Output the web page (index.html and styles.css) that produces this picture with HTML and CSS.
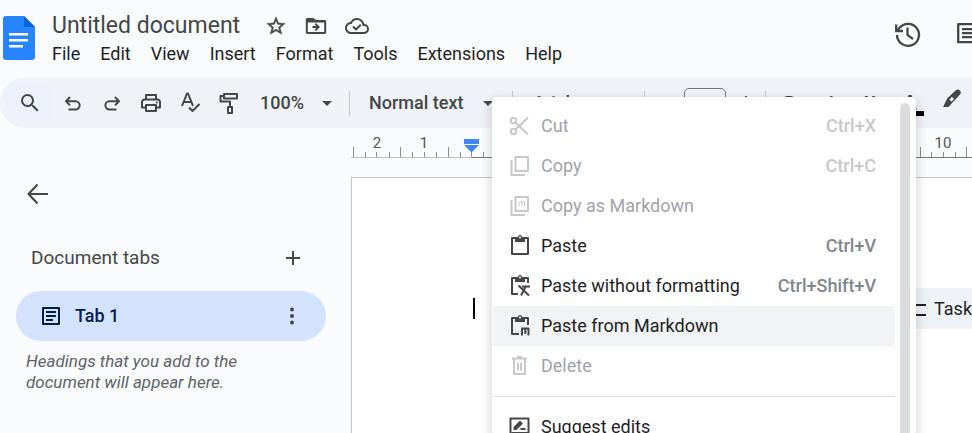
FILE: index.html
```html
<!DOCTYPE html>
<html lang="en">
<head>
<meta charset="utf-8">
<title>Untitled document</title>
<link rel="stylesheet" href="styles.css">
</head>
<body>
<header class="header">
  <a class="logo" href="#" aria-label="Docs home">
    <svg width="32" height="44" viewBox="0 0 32 44"><path fill="#2684fc" d="M3 0h18l11 11v30a3 3 0 0 1-3 3H3a3 3 0 0 1-3-3V3a3 3 0 0 1 3-3z"/><path fill="#0066da" d="M21 0l11 11H21z"/><path fill="#fff" d="M6 17h19v2.500H6zM6 23h19v2.500H6zM6 29h14v2.500H6z"/></svg>
  </a>
  <div class="heading">
    <div class="title-row">
      <h1 class="title">Untitled document</h1>
      <div class="title-actions">
        <button class="icon-button" aria-label="Star"><svg width="22" height="22" viewBox="0 0 24 24"><path stroke="currentColor" stroke-width=".5" d="M22 9.240l-7.190-.620L12 2 9.190 8.630 2 9.240l5.460 4.730L5.820 21 12 17.270 18.180 21l-1.630-7.030L22 9.240zM12 15.400l-3.760 2.270 1-4.280-3.320-2.880 4.380-.380L12 6.100l1.710 4.040 4.380.380-3.320 2.880 1 4.280L12 15.400z"/></svg></button>
        <button class="icon-button" aria-label="Move"><svg width="24" height="24" viewBox="0 0 24 24"><path d="M20.500 6H12L9.500 4H3.500C2.500 4 1.800 4.700 1.800 5.700v12.600c0 1 .7 1.700 1.700 1.700h17c1 0 1.700-.7 1.700-1.700V7.700c0-1-.7-1.700-1.700-1.700zm-.3 12H3.800V8.500h16.400zM12 9l-1.300 1.300 1.600 1.700H8.500v2h3.800l-1.600 1.700L12 17l4-4z"/></svg></button>
        <button class="icon-button" aria-label="Document status"><svg width="24" height="24" viewBox="0 0 24 24"><path d="M19.350 10.040A7.490 7.490 0 0 0 12 4C9.110 4 6.600 5.640 5.350 8.040A5.990 5.990 0 0 0 0 14c0 3.310 2.690 6 6 6h13c2.760 0 5-2.240 5-5 0-2.640-2.050-4.780-4.650-4.960zM19 18H6c-2.210 0-4-1.790-4-4 0-2.050 1.530-3.760 3.560-3.970l1.070-.110.5-.950A5.469 5.469 0 0 1 12 6c2.620 0 4.880 1.860 5.390 4.430l.3 1.500 1.530.110A2.980 2.980 0 0 1 22 15c0 1.650-1.350 3-3 3z"/><path class="line" d="M8 12.500l3 3 4.800-4.800"/></svg></button>
      </div>
    </div>
    <nav class="menubar">
      <button>File</button><button>Edit</button><button>View</button><button>Insert</button><button>Format</button><button>Tools</button><button>Extensions</button><button>Help</button>
    </nav>
  </div>
  <div class="header-end">
    <button class="icon-button" aria-label="Version history"><svg width="28" height="28" viewBox="0 0 28 28"><path fill="none" stroke="currentColor" stroke-width="2.300" d="M3 14A11 11 0 1 0 6 6.300L3.500 9M2.200 3.500V10h6.800M13.500 6.500V14l5.500 4.200"/></svg></button>
    <button class="icon-button" aria-label="Comments"><svg width="28" height="28" viewBox="0 0 28 28"><path fill="none" stroke="currentColor" stroke-width="2.300" stroke-linejoin="round" d="M2.200 3.200h23v22l-4-4h-19z"/><path d="M6 7h16v2.200H6zM6 11h16v2.200H6zM6 15h16v2.200H6z"/></svg></button>
  </div>
</header>

<div class="toolbar" role="toolbar" aria-label="Main">
  <button class="tool search" aria-label="Search the menus"><svg width="24" height="24" viewBox="0 0 24 24"><path d="M15.500 14h-.79l-.28-.27A6.470 6.470 0 0 0 16 9.500 6.500 6.500 0 1 0 9.500 16c1.610 0 3.090-.59 4.230-1.570l.27.28v.79l5 4.990L20.490 19l-4.990-5zm-6 0C7.010 14 5 11.990 5 9.500S7.010 5 9.500 5 14 7.010 14 9.500 11.990 14 9.500 14z"/></svg></button>
  <button class="tool" aria-label="Undo"><svg class="line" width="24" height="24" viewBox="0 0 24 24"><path d="M9 6L5 10.200l4 4.200M5.500 10.200h9a4.150 4.150 0 0 1 0 8.300H7.500"/></svg></button>
  <button class="tool" aria-label="Redo"><svg class="line" width="24" height="24" viewBox="0 0 24 24"><path d="M15 6l4 4.200-4 4.200M18.500 10.200h-9a4.150 4.150 0 0 0 0 8.300h7"/></svg></button>
  <button class="tool" aria-label="Print"><svg class="line" width="24" height="24" viewBox="0 0 24 24"><path d="M7 8V4h10v4M7 16.500H3V11a2.500 2.500 0 0 1 2.500-2.500h13A2.500 2.500 0 0 1 21 11v5.500h-4M7 14h10v6H7z"/><path d="M17 11.500h1.500"/></svg></button>
  <button class="tool" aria-label="Spelling and grammar check"><svg class="line" width="24" height="24" viewBox="0 0 24 24"><path d="M4 15L9 2.500h1L15 15M5.800 11h7.400M11 16.500l3.500 3.500 7-7"/></svg></button>
  <button class="tool" aria-label="Paint format"><svg class="line" width="24" height="24" viewBox="0 0 24 24"><path d="M7 3h13v4.500H7zM7 5H3.500v5.500H13v5M11 16h4v6h-4z"/></svg></button>
  <label class="picker zoom-picker"><select aria-label="Zoom"><option>100%</option></select><svg width="10" height="5" viewBox="0 0 10 5"><path d="M0 0h10L5 5z"/></svg></label>
  <span class="divider"></span>
  <label class="picker style-picker"><select aria-label="Styles"><option>Normal text</option></select><svg width="10" height="5" viewBox="0 0 10 5"><path d="M0 0h10L5 5z"/></svg></label>
  <span class="divider"></span>
  <label class="picker font-picker"><select aria-label="Font"><option>Arial</option></select></label>
  <span class="divider"></span>
  <button class="tool" aria-label="Decrease font size">−</button>
  <input class="size" aria-label="Font size" value="11">
  <button class="tool" aria-label="Increase font size"><svg class="line" width="14" height="14" viewBox="0 0 14 14"><path d="M7 0v14M0 7h14"/></svg></button>
  <span class="divider"></span>
  <button class="tool letter bold" aria-label="Bold">B</button>
  <button class="tool letter italic" aria-label="Italic">I</button>
  <button class="tool letter underline" aria-label="Underline">U</button>
  <button class="tool letter color" aria-label="Text color">A</button>
  <button class="tool marker" aria-label="Highlight color"><svg width="24" height="24" viewBox="0 0 24 24"><path fill-rule="evenodd" d="M3 20l4.500-9 8-7.500c1.500-1.300 3-1.300 4.300 0s1.300 2.900 0 4.200l-7.500 8L8.500 20zM9.500 12.500l2 2.200 2.600-2.700-2.200-2.200z"/></svg></button>
</div>

<main class="workspace">
  <aside class="sidebar">
    <button class="icon-button back" aria-label="Close tabs and outlines"><svg class="line" width="24" height="24" viewBox="0 0 24 24"><path d="M12.500 2.500L3.500 12l9 9.500M3.500 12H23"/></svg></button>
    <div class="tabs-heading">
      <h2>Document tabs</h2>
      <button class="icon-button" aria-label="Add tab"><svg class="line" width="14" height="14" viewBox="0 0 14 14"><path d="M7 0v14M0 7h14"/></svg></button>
    </div>
    <div class="tab">
      <svg class="line" width="20" height="20" viewBox="0 0 20 20"><path stroke-linejoin="round" d="M2 2h16v16H2z"/><path d="M5 6h10M5 10h10M5 14h7"/></svg>
      <a href="#">Tab 1</a>
      <button class="icon-button" aria-label="Tab options"><svg width="6" height="18" viewBox="0 0 6 18"><circle cx="3" cy="2.500" r="2"/><circle cx="3" cy="9" r="2"/><circle cx="3" cy="15.500" r="2"/></svg></button>
    </div>
    <p class="hint">Headings that you add to the document will appear here.</p>
  </aside>
  <section class="canvas">
    <svg class="ruler" height="30" aria-label="Ruler">
      <path class="base" d="M0 29.500h121"/>
      <path class="base dark" d="M121 29.500H3000"/>
      <path class="ticks" d="M2.500 19v10M14.500 24v5M25.500 24v5M38.500 24v5M49.500 19v10M61.500 24v5M73.500 24v5M85.500 24v5M97.500 19v10M109.500 24v5M120.500 24v5M132.500 24v5M569.500 19v10M580.500 24v5M592.500 24v5M604.500 24v5M615.500 19v10"/>
      <text x="26" y="20">2</text><text x="73" y="20">1</text><text x="592" y="20">10</text>
      <path fill="#4285f4" d="M113 11h15v5h-15zM113 17h15l-7.500 7.500z"/>
    </svg>
    <div class="page">
      <span class="caret"></span>
      <button class="chip"><svg class="line" width="24" height="20" viewBox="0 0 24 20"><path d="M2 5l3 3 5-6M12 6h12M2 15l3 3 5-6M12 16h12"/></svg>Task</button>
    </div>
  </section>
</main>

<div class="context">
  <div class="context-items" role="menu">
    <button role="menuitem" disabled><svg class="line" width="24" height="24" viewBox="0 0 24 24"><circle cx="5.500" cy="6.500" r="2.700"/><circle cx="5.500" cy="17.500" r="2.700"/><path d="M7.500 8.500L20 20.500M7.500 15.500L20 3.500"/></svg><span>Cut</span><kbd>Ctrl+X</kbd></button>
    <button role="menuitem" disabled><svg class="line" width="24" height="24" viewBox="0 0 24 24"><path d="M7.500 3H20v14H7.500zM3.500 6v15H17"/></svg><span>Copy</span><kbd>Ctrl+C</kbd></button>
    <button role="menuitem" disabled><svg class="line" width="24" height="24" viewBox="0 0 24 24"><path d="M7.500 3H20v14H7.500zM3.500 6v15H17"/><path class="thin" d="M11 13V8h5.500v5M13.750 8v4"/></svg><span>Copy as Markdown</span></button>
    <button role="menuitem"><svg class="line" width="24" height="24" viewBox="0 0 24 24"><path d="M4 4h16v16H4z"/><path class="solid" d="M7 3h3a2 2 0 0 1 4 0h3v5H7z"/><circle class="hole" cx="12" cy="3.500" r="1"/></svg><span>Paste</span><kbd>Ctrl+V</kbd></button>
    <button role="menuitem"><svg class="line" width="24" height="24" viewBox="0 0 24 24"><path d="M20 9V4H4v16h6"/><path class="solid" d="M7 3h3a2 2 0 0 1 4 0h3v5H7z"/><circle class="hole" cx="12" cy="3.500" r="1"/><path d="M10.500 11.500l10.500 10M14 12.500h8M17.500 13l-4.500 8.500"/></svg><span>Paste without formatting</span><kbd>Ctrl+Shift+V</kbd></button>
    <button role="menuitem" class="active"><svg class="line" width="24" height="24" viewBox="0 0 24 24"><path d="M20 11V4H4v16h7"/><path class="solid" d="M7 3h3a2 2 0 0 1 4 0h3v5H7z"/><circle class="hole" cx="12" cy="3.500" r="1"/><path d="M14 21.500V14.500h6.500v7M17.300 15v5"/></svg><span>Paste from Markdown</span></button>
    <button role="menuitem" disabled><svg class="line" width="24" height="24" viewBox="0 0 24 24"><path d="M4 4.500h15M9 3h5M6 5v15h11V5M10 8.500v8M13 8.500v8"/></svg><span>Delete</span></button>
    <hr>
    <button role="menuitem"><svg class="line" width="24" height="24" viewBox="0 0 24 24"><path d="M2.500 22V3.500h18V18H4.500z"/><path class="solid" d="M5.500 15v-3L12 5.500l3 3L8.500 15z"/><path d="M12.500 14h5"/></svg><span>Suggest edits</span></button>
  </div>
  <div class="scrollbar"></div>
</div>
</body>
</html>
```
FILE: styles.css
```css
* { box-sizing: border-box; }

body {
  margin: 0;
  height: 100vh;
  overflow: hidden;
  display: flex;
  flex-direction: column;
  background: #f9fbfd;
  color: #1f1f1f;
  font: 18px/24px Roboto, sans-serif;
}

button, input, select {
  font: inherit;
  color: inherit;
  background: none;
  border: 0;
  margin: 0;
  padding: 0;
}

h1, h2, p { margin: 0; font-weight: 400; }

svg { display: block; flex: none; fill: currentColor; }

.line { fill: none; stroke: currentColor; stroke-width: 2; stroke-linejoin: round; }
.line .thin { stroke-width: 1; }
.line .solid { fill: currentColor; stroke: none; }
.line .hole { fill: #fff; stroke: none; }

.icon-button { color: #444746; display: grid; place-items: center; }

/* Header */
.header {
  display: flex;
  align-items: flex-start;
  flex: none;
  height: 78px;
  padding-left: 3px;
  overflow: hidden;
}
.logo { margin-top: 16px; }
.heading { margin: 12px 0 0 17px; flex: 1; }
.title-row { display: flex; align-items: center; gap: 25px; height: 28px; }
.title { font-size: 23px; line-height: 28px; color: #444746; }
.title-actions { display: flex; align-items: center; gap: 17px; }
.menubar { display: flex; gap: 20px; padding: 2px 0; }
.header-end { display: flex; gap: 34px; margin: 21px -12px 0 0; }

/* Toolbar */
.toolbar {
  display: flex;
  align-items: center;
  flex: none;
  height: 50px;
  padding-left: 7px;
  overflow: hidden;
  border-radius: 25px 0 0 25px;
  background: #eff3f8;
  color: #444746;
}
.tool { display: grid; place-items: center; flex: none; width: 39px; height: 36px; }
.search { width: 46px; background: #edf1fa; }
.picker { display: flex; align-items: center; justify-content: space-between; flex: none; }
.picker select { appearance: none; font-weight: 500; }
.zoom-picker { width: 73px; margin-left: 12px; }
.zoom-picker, .style-picker { padding-right: 1px; }
.style-picker { width: 125px; margin-left: 19px; }
.font-picker { width: 111px; margin-left: 20px; }
.divider { flex: none; width: 1px; height: 25px; background: #c7c7c7; }
.zoom-picker + .divider { margin-left: 16px; }
.style-picker + .divider { margin-left: 18px; }
.size {
  width: 42px;
  height: 30px;
  flex: none;
  border: 1px solid #747775;
  border-radius: 5px;
  text-align: center;
  font-weight: 500;
}
.letter { width: 40px; font-weight: 700; }
.bold { margin-left: 4px; }
.italic { font-style: italic; }
.underline { text-decoration: underline; }
.color { font-size: 20px; background: linear-gradient(#000, #000) 50% 26px / 28px 5px no-repeat; }
.marker { width: 44px; padding-top: 2px; align-items: start; }

/* Workspace */
.workspace { display: flex; flex: 1; min-height: 0; }
.sidebar { width: 351px; flex: none; padding: 54px 25px 0 16px; }
.back { margin-left: 9px; }
.tabs-heading {
  display: flex;
  align-items: center;
  justify-content: space-between;
  padding: 40px 26px 0 15px;
  color: #444746;
}
.tabs-heading h2 { font-size: 19px; font-weight: 400; }
.tab {
  display: flex;
  align-items: center;
  height: 50px;
  margin-top: 21px;
  padding: 0 31px 0 25px;
  border-radius: 25px;
  background: #d3e3fd;
  color: #041e49;
}
.tab a { flex: 1; margin-left: 14px; color: inherit; text-decoration: none; font-weight: 500; }
.hint { max-width: 240px; padding: 10px; font-size: 17px; line-height: 21px; font-style: italic; color: #5f6368; }

.canvas { flex: 1; min-width: 0; display: flex; flex-direction: column; }
.ruler { width: 100%; overflow: hidden; }
.base { stroke: #c0c3c6; }
.dark { stroke: #777a7d; }
.ticks { stroke: #8a8d91; fill: none; }
.ruler text { font-size: 15px; text-anchor: middle; fill: #555; }
.page {
  display: flex;
  flex: 1;
  align-items: flex-start;
  justify-content: space-between;
  margin-top: 19px;
  padding: 110px 0 0 121px;
  border: solid #c7c7c7;
  border-width: 1px 0 0 1px;
  background: #fff;
}
.caret { width: 2px; height: 21px; margin-top: 10px; background: #000; }
.chip {
  display: flex;
  align-items: center;
  gap: 8px;
  height: 41px;
  padding: 0 0 0 20px;
  background: #eff3f8;
}

/* Context menu, floating over the page */
.context {
  position: absolute;
  z-index: 2;
  top: 97px;
  left: 492px;
  bottom: 0;
  width: 424px;
  display: flex;
  gap: 5px;
  padding: 6px 6px 0 1px;
  overflow: hidden;
  border-radius: 5px 5px 0 0;
  background: #fff;
  box-shadow: 0 4px 10px 2px rgba(60, 64, 67, .2);
}
.context-items { flex: 1; padding-top: 3px; }
.context-items button {
  display: flex;
  align-items: center;
  width: 100%;
  height: 40px;
  padding: 0 19px 0 15px;
  gap: 9px;
  text-align: left;
}
.context-items span { flex: 1; }
.context-items svg { color: #444746; }
.context-items kbd { font: inherit; font-weight: 500; color: #80868b; }
.context-items button:disabled { color: #a0a3a8; }
.context-items button:disabled svg, .context-items button:disabled kbd { color: #c7c8ca; }
.context-items .active { background: #f1f3f4; }
.context-items hr { margin: 10px 0; border: 0; border-top: 1px solid #dadce0; }
.scrollbar { width: 10px; border-radius: 5px 5px 0 0; background: #dadce0; }
```
